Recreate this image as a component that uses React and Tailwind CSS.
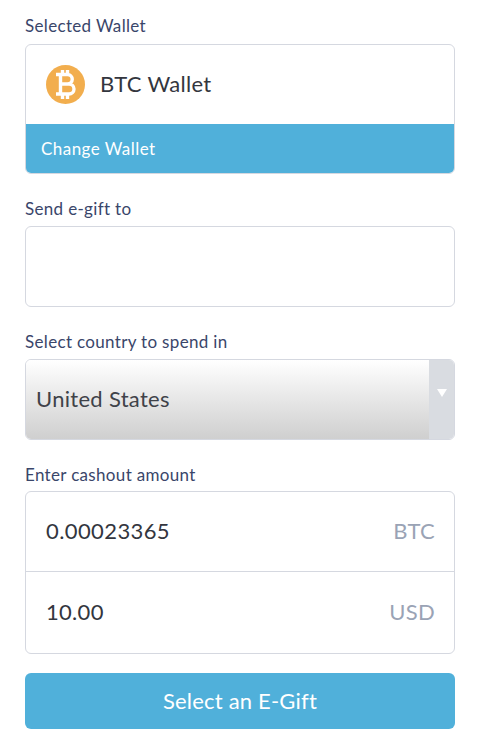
import React from "react";

const Label = ({ children }) => (
  <label className="block text-[17px] leading-[20px] text-[#3a466a] tracking-[0.33px]">{children}</label>
);

const BitcoinIcon = () => (
  <svg width="39" height="39" viewBox="0 0 39 39">
    <circle cx="19.5" cy="19.5" r="19.5" fill="#f2ae4e" />
    <path
      d="M14.5 10v19M10 9.5h11.5a4.6 4.6 0 0 1 0 9.5h-7M14.5 19h8.5a5 5 0 0 1 0 10H10M16.5 5v4M21.5 5v4M16.5 30v4M21.5 30v4"
      fill="none"
      stroke="#fff"
      strokeWidth="3.4"
    />
  </svg>
);

const App = () => {
  return (
    <div className="h-[749px] w-[480px] overflow-hidden bg-white px-[25px] pt-[16px] font-['Lato','Open_Sans',sans-serif]">
      {/* Selected wallet */}
      <Label>Selected Wallet</Label>
      <div className="mt-[8px] h-[130px] overflow-hidden rounded-[6px] border border-[#d5d8e0]">
        <div className="flex h-[79px] items-center pl-[20px]">
          <BitcoinIcon />
          <span className="ml-[15px] pb-[2px] text-[22px] tracking-[0.3px] text-[#33363e]">BTC Wallet</span>
        </div>
        <div className="flex h-[50px] items-center bg-[#50b0da] pl-[15px] text-[17px] tracking-[0.45px] text-white">
          Change Wallet
        </div>
      </div>

      {/* Recipient */}
      <div className="mt-[25px]">
        <Label>Send e-gift to</Label>
        <div className="mt-[7px] h-[81px] rounded-[6px] border border-[#d5d8e0]" />
      </div>

      {/* Country */}
      <div className="mt-[25px]">
        <Label>Select country to spend in</Label>
        <div className="mt-[7px] flex h-[81px] overflow-hidden rounded-[6px] border border-[#d5d8e0]">
          <div className="flex flex-1 items-center bg-gradient-to-b from-white to-[#cfcfcf] pb-[2px] pl-[10px] text-[22px] tracking-[0.3px] text-[#3f4249]">
            United States
          </div>
          <div className="flex w-[25px] justify-center bg-[#d9dce1] pt-[29px]">
            <svg width="10" height="8" viewBox="0 0 10 8">
              <path d="M0 0h10L5 8z" fill="#fff" />
            </svg>
          </div>
        </div>
      </div>

      {/* Amount */}
      <div className="mt-[25px]">
        <Label>Enter cashout amount</Label>
        <div className="mt-[6px] h-[163px] rounded-[6px] border border-[#d5d8e0]">
          <div className="flex h-[80px] items-center justify-between border-b border-[#d5d8e0] pb-[2px] pl-[20px] pr-[19px]">
            <span className="text-[22px] tracking-[0.4px] text-[#33363e]">0.00023365</span>
            <span className="text-[22px] tracking-[0.3px] text-[#9aa3b5]">BTC</span>
          </div>
          <div className="flex h-[81px] items-center justify-between pb-[2px] pl-[20px] pr-[19px]">
            <span className="text-[22px] tracking-[0.3px] text-[#33363e]">10.00</span>
            <span className="text-[22px] tracking-[0.3px] text-[#9aa3b5]">USD</span>
          </div>
        </div>
      </div>

      <button className="mt-[19px] h-[56px] w-full rounded-[6px] bg-[#50b0da] pb-[2px] text-[22px] tracking-[0.2px] text-white">
        Select an E-Gift
      </button>
    </div>
  );
};

export default App;
